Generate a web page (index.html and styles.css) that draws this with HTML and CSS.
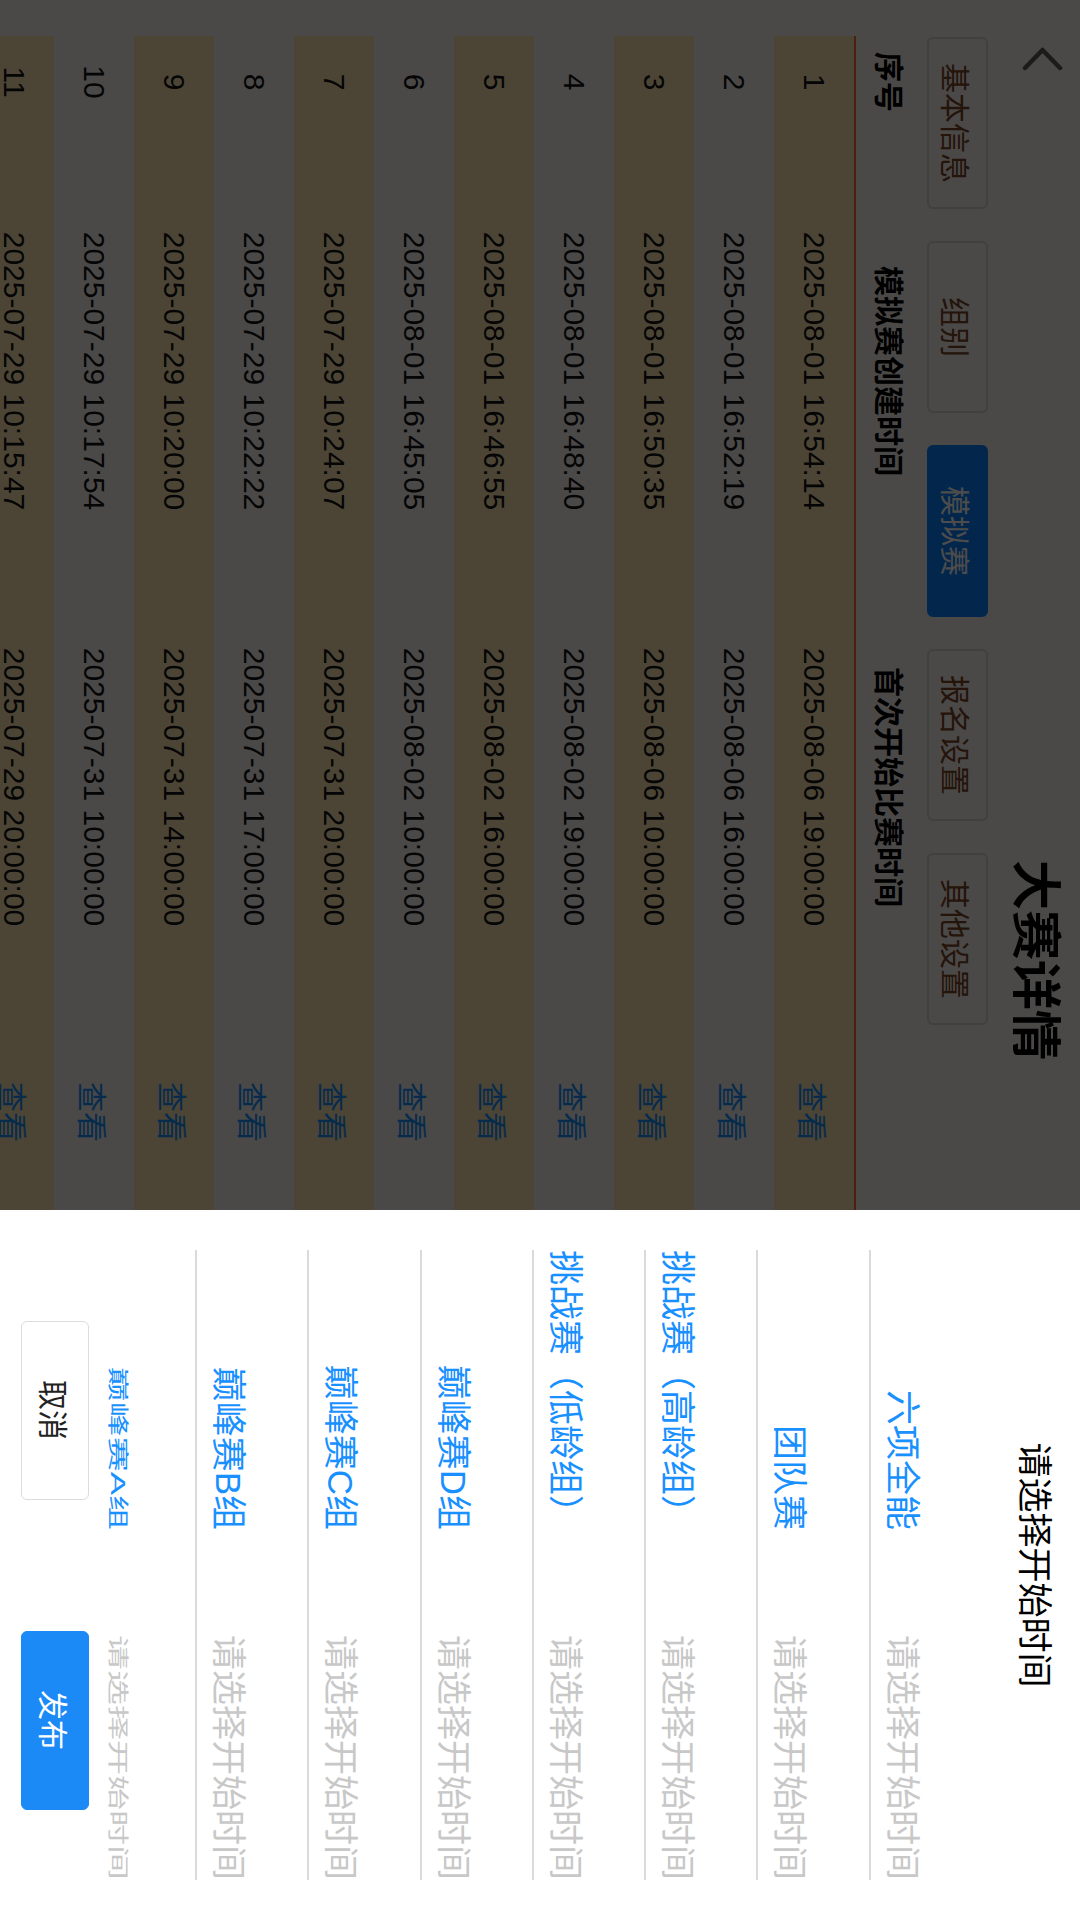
FILE: index.html
```html
<!DOCTYPE html>
<html lang="zh-CN">
<head>
<meta charset="utf-8">
<title>大赛详情</title>
<link rel="stylesheet" href="styles.css">
</head>
<body>
<div class="screen">
  <div class="land">
    <div class="page">
      <header class="topbar">
        <div class="back">
          <svg width="26" height="42" viewBox="0 0 26 42"><polyline points="22,3 4,20.5 22,38" fill="none" stroke="#5a5a5a" stroke-width="4.5" stroke-linecap="round" stroke-linejoin="round"/></svg>
        </div>
        <h1 class="title">大赛详情</h1>
        <div></div>
      </header>
      <nav class="tabs">
        <div class="tab">基本信息</div>
        <div class="tab">组别</div>
        <div class="tab active">模拟赛</div>
        <div class="tab">报名设置</div>
        <div class="tab">其他设置</div>
      </nav>
      <div class="table">
        <div class="tr th">
          <div class="c1">序号</div>
          <div class="c2">模拟赛创建时间</div>
          <div class="c3">首次开始比赛时间</div>
          <div class="c4"></div>
        </div>
        <div class="tr"><div class="c1">1</div><div class="c2">2025-08-01 16:54:14</div><div class="c3">2025-08-06 19:00:00</div><div class="c4 link">查看</div></div>
        <div class="tr"><div class="c1">2</div><div class="c2">2025-08-01 16:52:19</div><div class="c3">2025-08-06 16:00:00</div><div class="c4 link">查看</div></div>
        <div class="tr"><div class="c1">3</div><div class="c2">2025-08-01 16:50:35</div><div class="c3">2025-08-06 10:00:00</div><div class="c4 link">查看</div></div>
        <div class="tr"><div class="c1">4</div><div class="c2">2025-08-01 16:48:40</div><div class="c3">2025-08-02 19:00:00</div><div class="c4 link">查看</div></div>
        <div class="tr"><div class="c1">5</div><div class="c2">2025-08-01 16:46:55</div><div class="c3">2025-08-02 16:00:00</div><div class="c4 link">查看</div></div>
        <div class="tr"><div class="c1">6</div><div class="c2">2025-08-01 16:45:05</div><div class="c3">2025-08-02 10:00:00</div><div class="c4 link">查看</div></div>
        <div class="tr"><div class="c1">7</div><div class="c2">2025-07-29 10:24:07</div><div class="c3">2025-07-31 20:00:00</div><div class="c4 link">查看</div></div>
        <div class="tr"><div class="c1">8</div><div class="c2">2025-07-29 10:22:22</div><div class="c3">2025-07-31 17:00:00</div><div class="c4 link">查看</div></div>
        <div class="tr"><div class="c1">9</div><div class="c2">2025-07-29 10:20:00</div><div class="c3">2025-07-31 14:00:00</div><div class="c4 link">查看</div></div>
        <div class="tr"><div class="c1">10</div><div class="c2">2025-07-29 10:17:54</div><div class="c3">2025-07-31 10:00:00</div><div class="c4 link">查看</div></div>
        <div class="tr"><div class="c1">11</div><div class="c2">2025-07-29 10:15:47</div><div class="c3">2025-07-29 20:00:00</div><div class="c4 link">查看</div></div>
      </div>
    </div>
    <div class="mask"></div>
    <aside class="sheet">
      <div class="sheet-title">请选择开始时间</div>
      <div class="list">
        <div class="row"><div class="label">六项全能</div><div class="value">请选择开始时间</div></div>
        <div class="row"><div class="label">团队赛</div><div class="value">请选择开始时间</div></div>
        <div class="row"><div class="label">挑战赛（高龄组）</div><div class="value">请选择开始时间</div></div>
        <div class="row"><div class="label">挑战赛（低龄组）</div><div class="value">请选择开始时间</div></div>
        <div class="row"><div class="label">巅峰赛D组</div><div class="value">请选择开始时间</div></div>
        <div class="row"><div class="label">巅峰赛C组</div><div class="value">请选择开始时间</div></div>
        <div class="row"><div class="label">巅峰赛B组</div><div class="value">请选择开始时间</div></div>
        <div class="row squish"><div class="label">巅峰赛A组</div><div class="value">请选择开始时间</div></div>
      </div>
      <div class="footer">
        <button class="btn cancel">取消</button>
        <button class="btn primary">发布</button>
      </div>
    </aside>
  </div>
</div>
</body>
</html>
```
FILE: styles.css
```css
* { box-sizing: border-box; }
html, body { margin: 0; padding: 0; }
body {
  width: 1080px;
  height: 1920px;
  overflow: hidden;
  font-family: "Liberation Sans", "Noto Sans CJK SC", sans-serif;
  background: #ffffff;
}
.screen {
  position: relative;
  width: 1080px;
  height: 1920px;
  overflow: hidden;
}
.land {
  position: absolute;
  top: 0;
  left: 0;
  width: 1920px;
  height: 1080px;
  transform-origin: 0 0;
  transform: translateX(1080px) rotate(90deg);
  background: #f7f3f0;
  overflow: hidden;
}
.page {
  width: 1920px;
  height: 1080px;
}
.topbar {
  display: grid;
  grid-template-columns: 1fr auto 1fr;
  align-items: center;
  height: 90px;
}
.back {
  padding-left: 46px;
  display: flex;
  align-items: center;
  height: 90px;
  padding-bottom: 14px;
}
.back svg { display: block; }
.title {
  margin: 0;
  font-size: 50px;
  font-weight: bold;
  line-height: 90px;
  color: #000;
}
.tabs {
  display: flex;
  gap: 32px;
  margin-top: 2px;
  padding-left: 37px;
}
.tab {
  width: 172px;
  height: 61px;
  border: 2px solid #d5d5d5;
  border-radius: 6px;
  display: flex;
  align-items: center;
  justify-content: center;
  font-size: 30px;
  color: #7a4424;
}
.tab.active {
  background: #0a80ff;
  border-color: #0a80ff;
  color: #ffffff;
}
.table {
  margin-left: 36px;
  width: 1848px;
}
.tr {
  display: flex;
  height: 80px;
  align-items: center;
  font-size: 30px;
  color: #111;
}
.tr:nth-child(even) { background: #fde6b1; }
.tr.th {
  height: 73px;
  border-bottom: 2px solid #ff6a35;
  font-weight: bold;
  color: #000;
}
.tr > div { text-align: center; white-space: nowrap; }
.c1 { width: 92px; }
.c2 { width: 486px; }
.c3 { width: 346px; }
.c4 { width: 304px; }
.link { color: #1890ff; }
.mask {
  position: absolute;
  inset: 0;
  background: rgba(0, 0, 0, 0.7);
}
.sheet {
  position: absolute;
  top: 0;
  right: 0;
  width: 710px;
  height: 1080px;
  background: #ffffff;
  display: flex;
  flex-direction: column;
  padding: 0 40px;
}
.sheet-title {
  height: 99px;
  line-height: 92px;
  text-align: center;
  font-size: 35px;
  color: #000;
  flex: none;
}
.list {
  height: 876px;
  overflow: hidden;
  flex: none;
}
.row {
  height: 112.3px;
  border-bottom: 2px solid #dadada;
  display: flex;
  align-items: flex-end;
  padding-bottom: 11px;
  font-size: 35px;
  line-height: 40px;
}
.label {
  width: 280px;
  text-align: right;
  color: #1890ff;
  white-space: nowrap;
}
.value {
  flex: 1;
  text-align: right;
  color: #c8c8c8;
  white-space: nowrap;
}
.row.squish > div {
  transform: translateY(-5px) scaleY(0.6);
  transform-origin: 50% 70%;
}
.footer {
  flex: 1;
  display: flex;
  justify-content: center;
  align-items: flex-end;
  gap: 131px;
  padding-bottom: 21px;
}
.btn {
  width: 179px;
  height: 68px;
  border-radius: 6px;
  font-family: "Liberation Sans", "Noto Sans CJK SC", sans-serif;
  font-size: 30px;
  padding: 0;
  cursor: pointer;
}
.btn.cancel {
  background: #ffffff;
  border: 1px solid #dcdcdc;
  color: #222;
}
.btn.primary {
  background: #1b8af7;
  border: 1px solid #1b8af7;
  color: #ffffff;
}
```
